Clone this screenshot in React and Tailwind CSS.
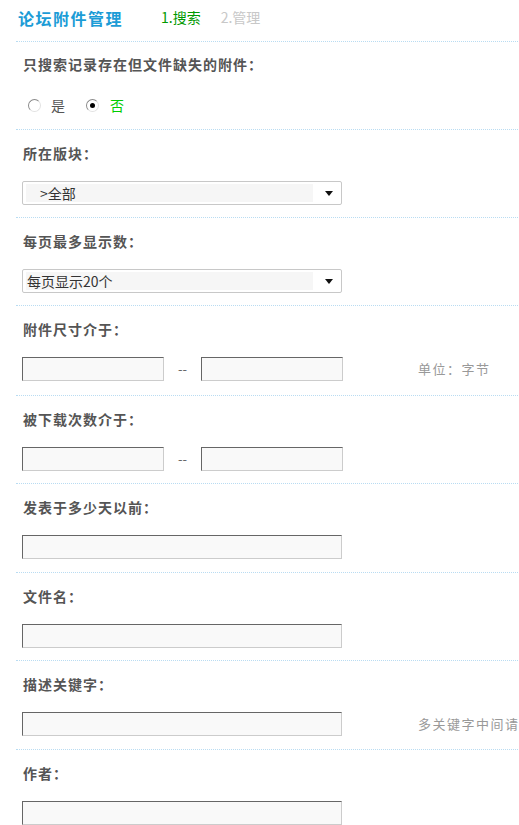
import React, { useState } from "react";

const FONT = { fontFamily: '"Noto Sans CJK SC", "Noto Sans", sans-serif' };

const Radio = ({ checked, onClick }) => (
  <span
    onClick={onClick}
    className="relative inline-block w-[13px] h-[13px] rounded-full border border-t-[#8a8a8a] border-l-[#8a8a8a] border-r-[#e2e2e2] border-b-[#e2e2e2] bg-white cursor-pointer"
  >
    {checked && (
      <span className="absolute left-[3px] top-[3px] w-[5px] h-[5px] rounded-full bg-black" />
    )}
  </span>
);

const TextInput = ({ wide }) => (
  <input
    type="text"
    className={`${wide ? "w-[320px]" : "w-[142px]"} h-[24px] bg-[#f9f9f9] border border-t-[#666] border-l-[#666] border-r-[#ccc] border-b-[#ccc] outline-none px-1 text-[13px]`}
  />
);

const Select = ({ value, indent }) => (
  <div className="w-[320px] h-[24px] border border-[#c8c8c8] rounded-[2px] bg-white flex items-center pl-[3px] pr-[8px]">
    <div className={`flex-1 h-[18px] bg-[#f6f6f6] mr-[12px] flex items-center text-[14px] text-[#333] ${indent ? "pl-[14px]" : "pl-[1px]"}`}>
      {value}
    </div>
    <span className="w-0 h-0 border-l-[4px] border-r-[4px] border-t-[5px] border-l-transparent border-r-transparent border-t-[#111]" />
  </div>
);

const Section = ({ label, pb = "pb-[12px]", children }) => (
  <div className="border-t border-dotted border-[#b9dcf2]">
    <div className="h-[47px] flex items-center pl-[7px] text-[14px] font-bold tracking-[1px] text-[#555]">
      {label}
    </div>
    <div className={`pt-[4px] ${pb} pl-[6px] flex items-center`}>{children}</div>
  </div>
);

const Hint = ({ children, ml }) => (
  <span className={`${ml} text-[13px] tracking-[1.5px] text-[#999] whitespace-nowrap`}>{children}</span>
);

export default function App() {
  const [lost, setLost] = useState(false);

  return (
    <div className="w-full overflow-hidden bg-white" style={FONT}>
      <div className="w-[760px] pl-4">
        <div className="h-[41px] flex items-start pt-[6px]">
          <span className="pl-[2px] text-[16px] font-bold tracking-[1.5px] text-[#1c9cd6]">论坛附件管理</span>
          <span className="ml-[38px] mt-[1px] text-[14px] text-[#009900]">1.搜索</span>
          <span className="ml-[20px] mt-[1px] text-[14px] text-[#c8c8c8]">2.管理</span>
        </div>

        <div className="border-t border-dotted border-[#b9dcf2]">
          <div className="h-[44px] flex items-center pl-[7px] text-[14px] font-bold tracking-[1px] text-[#555]">
            只搜索记录存在但文件缺失的附件：
          </div>
          <div className="h-[43px] flex items-center pl-[12px] pb-[5px] text-[14px]">
            <Radio checked={lost} onClick={() => setLost(true)} />
            <span className="ml-[10px] text-[#555]">是</span>
            <span className="ml-[21px] flex items-center">
              <Radio checked={!lost} onClick={() => setLost(false)} />
            </span>
            <span className={`ml-[11px] ${lost ? "text-[#555]" : "text-[#00cc00]"}`}>否</span>
          </div>
        </div>

        <Section label="所在版块：">
          <Select value=">全部" indent />
        </Section>

        <Section label="每页最多显示数：">
          <Select value="每页显示20个" />
        </Section>

        <Section label="附件尺寸介于：" pb="pb-[14px]">
          <TextInput />
          <span className="mx-[14px] text-[13px] text-[#666]">--</span>
          <TextInput />
          <Hint ml="ml-[75px]">单位：字节</Hint>
        </Section>

        <Section label="被下载次数介于：">
          <TextInput />
          <span className="mx-[14px] text-[13px] text-[#666]">--</span>
          <TextInput />
        </Section>

        <Section label="发表于多少天以前：" pb="pb-[13px]">
          <TextInput wide />
        </Section>

        <Section label="文件名：">
          <TextInput wide />
        </Section>

        <Section label="描述关键字：" pb="pb-[13px]">
          <TextInput wide />
          <Hint ml="ml-[76px]">多关键字中间请用半角逗号隔开</Hint>
        </Section>

        <Section label="作者：">
          <TextInput wide />
        </Section>
      </div>
    </div>
  );
}
